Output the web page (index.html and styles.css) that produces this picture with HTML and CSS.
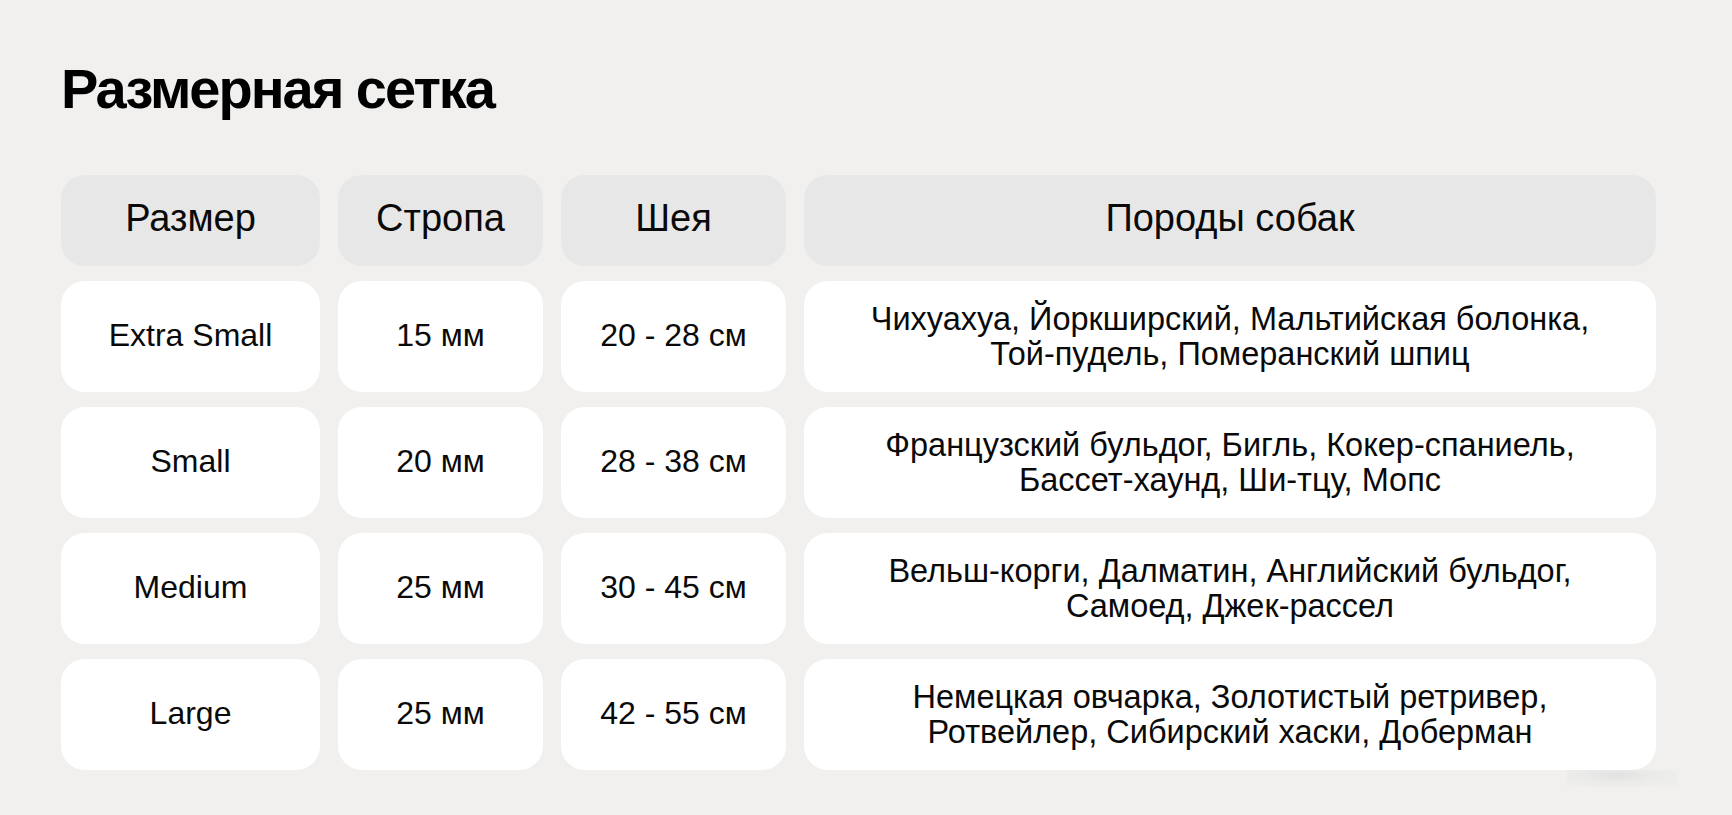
FILE: index.html
```html
<!DOCTYPE html>
<html lang="ru">
<head>
<meta charset="utf-8">
<title>Размерная сетка</title>
<link rel="stylesheet" href="styles.css">
</head>
<body>
<main class="page">
  <h1 class="title">Размерная сетка</h1>
  <div class="table">
    <div class="cell head">Размер</div>
    <div class="cell head">Стропа</div>
    <div class="cell head">Шея</div>
    <div class="cell head">Породы собак</div>

    <div class="cell">Extra Small</div>
    <div class="cell">15 мм</div>
    <div class="cell">20 - 28 см</div>
    <div class="cell breeds">Чихуахуа, Йоркширский, Мальтийская болонка,<br>Той-пудель, Померанский шпиц</div>

    <div class="cell">Small</div>
    <div class="cell">20 мм</div>
    <div class="cell">28 - 38 см</div>
    <div class="cell breeds">Французский бульдог, Бигль, Кокер-спаниель,<br>Бассет-хаунд, Ши-тцу, Мопс</div>

    <div class="cell">Medium</div>
    <div class="cell">25 мм</div>
    <div class="cell">30 - 45 см</div>
    <div class="cell breeds">Вельш-корги, Далматин, Английский бульдог,<br>Самоед, Джек-рассел</div>

    <div class="cell">Large</div>
    <div class="cell">25 мм</div>
    <div class="cell">42 - 55 см</div>
    <div class="cell breeds last">Немецкая овчарка, Золотистый ретривер,<br>Ротвейлер, Сибирский хаски, Доберман</div>
  </div>
</main>
</body>
</html>
```

FILE: styles.css
```css
html, body {
  margin: 0;
  padding: 0;
  background: #f1f0ef;
}

body {
  font-family: "Liberation Sans", Arial, sans-serif;
  color: #0a0a0a;
  height: 815px;
  overflow: hidden;
}

.page {
  padding: 61px 0 0 61px;
}

.title {
  margin: 0 0 58px 0;
  font-size: 56px;
  line-height: 56px;
  font-weight: 700;
  letter-spacing: -2px;
  color: #000;
}

.table {
  display: grid;
  grid-template-columns: 259px 205px 225px 852px;
  grid-template-rows: 91px repeat(4, 111px);
  column-gap: 18px;
  row-gap: 15px;
}

.cell {
  position: relative;
  background: #ffffff;
  border-radius: 24px;
  display: flex;
  align-items: center;
  justify-content: center;
  text-align: center;
  font-size: 32px;
  line-height: 35px;
  padding-bottom: 3px;
  box-sizing: border-box;
}

.head {
  background: #e7e7e7;
  font-size: 38px;
  padding-bottom: 5px;
}

.breeds {
  font-size: 32.5px;
  padding-bottom: 0;
}

.last::after {
  content: "";
  position: absolute;
  right: -21px;
  bottom: -17px;
  width: 110px;
  height: 17px;
  background: radial-gradient(ellipse at 45% 30%, #e2e2e2 0%, #ebebea 45%, #efefee 100%);
}
```
